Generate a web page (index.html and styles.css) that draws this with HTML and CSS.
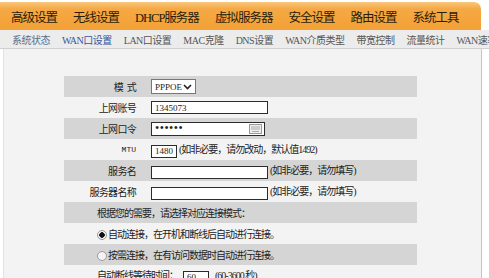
FILE: index.html
```html
<!DOCTYPE html>
<html lang="zh">
<head>
    <meta charset="UTF-8">
    <title>WAN口设置</title>
    <link rel="stylesheet" href="styles.css">
</head>
<body>
    <div class="topnav">
        <span>高级设置</span>
        <span>无线设置</span>
        <span>DHCP服务器</span>
        <span>虚拟服务器</span>
        <span>安全设置</span>
        <span>路由设置</span>
        <span>系统工具</span>
    </div>
    <div class="subnav">
        <span class="sub current">系统状态</span>
        <span class="sub active">WAN口设置</span>
        <span class="sub">LAN口设置</span>
        <span class="sub">MAC克隆</span>
        <span class="sub">DNS设置</span>
        <span class="sub">WAN介质类型</span>
        <span class="sub">带宽控制</span>
        <span class="sub">流量统计</span>
        <span class="sub">WAN速率</span>
    </div>

    <div class="panel">
        <table class="form">
            <tr class="shade">
                <td class="label">模&nbsp;&nbsp;式</td>
                <td class="field">
                    <span class="select">PPPOE
                        <svg width="9" height="6" viewBox="0 0 9 6"><path d="M1 1 L4.5 4.5 L8 1" fill="none" stroke="#222" stroke-width="1.6"/></svg>
                    </span>
                </td>
            </tr>
            <tr>
                <td class="label">上网账号</td>
                <td class="field"><input class="text wide" type="text" value="1345073"></td>
            </tr>
            <tr class="shade">
                <td class="label">上网口令</td>
                <td class="field">
                    <span class="pwd">
                        <input class="text secret" type="password" value="123456">
                        <svg class="kbd" width="13" height="10" viewBox="0 0 13 10">
                            <rect x="0.5" y="0.5" width="12" height="9" fill="#eee" stroke="#999"/>
                            <path d="M2 3h9M2 5h9M3 7.5h7" stroke="#aaa" stroke-width="1"/>
                        </svg>
                    </span>
                </td>
            </tr>
            <tr>
                <td class="label mono">MTU</td>
                <td class="field"><input class="text short" type="text" value="1480"><span class="hint">(如非必要，请勿改动，默认值1492)</span></td>
            </tr>
            <tr class="shade">
                <td class="label">服务名</td>
                <td class="field"><input class="text wide" type="text" value=""><span class="hint">(如非必要，请勿填写)</span></td>
            </tr>
            <tr>
                <td class="label">服务器名称</td>
                <td class="field"><input class="text wide" type="text" value=""><span class="hint">(如非必要，请勿填写)</span></td>
            </tr>
            <tr class="shade">
                <td class="line" colspan="2">根据您的需要，请选择对应连接模式：</td>
            </tr>
            <tr>
                <td class="line" colspan="2"><input class="radio" type="radio" name="mode" checked>自动连接，在开机和断线后自动进行连接。</td>
            </tr>
            <tr class="shade">
                <td class="line" colspan="2"><input class="radio" type="radio" name="mode">按需连接，在有访问数据时自动进行连接。</td>
            </tr>
            <tr>
                <td class="line" colspan="2">自动断线等待时间：<input class="text short gap" type="text" value="60"><span class="hint wide-gap">(60-3600 秒)</span></td>
            </tr>
        </table>
    </div>
</body>
</html>
```

FILE: styles.css
```css
body {
    margin: 0;
    background-color: #fff;
    font-family: "Liberation Serif", "Noto Sans CJK SC", serif;
    color: #222;
    overflow: hidden;
}
.topnav {
    margin-top: 2px;
    width: 481px;
    height: 28px;
    box-sizing: border-box;
    padding-left: 11px;
    display: flex;
    align-items: center;
    gap: 16px;
    background: linear-gradient(#f8c77f, #f5a843 25%, #f3a136);
    border-top-right-radius: 7px;
    font-size: 12.5px;
    letter-spacing: -1px;
    color: #2b1c0a;
    white-space: nowrap;
}
.subnav {
    position: relative;
    height: 18px;
    padding-left: 12px;
    display: flex;
    align-items: center;
    gap: 12px;
    background-color: #ececec;
    border-bottom: 1px solid #cfcfcf;
    font-size: 10px;
    letter-spacing: -0.5px;
    color: #555;
    white-space: nowrap;
    overflow: hidden;
}
.sub { position: relative; }
.sub.current { color: #56718f; }
.sub.active { color: #34569c; }
/* 当前菜单的小三角 */
.sub.current::before {
    content: "";
    position: absolute;
    left: 12px;
    top: -5px;
    border-left: 3px solid transparent;
    border-right: 3px solid transparent;
    border-top: 3px solid #8a8a8a;
}
.panel {
    margin-left: 3px;
    width: 479px;
    height: 229px;
    box-sizing: border-box;
    padding: 27px 0 0 60px;
    background-color: #f3f3f3;
    border-left: 1px solid #e2e2e2;
    border-right: 1px solid #c6c6c6;
}
.form {
    width: 353px;
    border-collapse: collapse;
    border-spacing: 0;
    font-size: 10px;
    letter-spacing: -1px;
}
.form tr { height: 21px; }
.form td {
    padding: 0;
    white-space: nowrap;
}
.form tr.shade td { background-color: #d5d5d5; }
.label {
    width: 80px;
    box-sizing: border-box;
    padding-right: 8px !important;
    text-align: right;
    letter-spacing: -0.7px;
}
.label.mono {
    font-family: "Liberation Mono", monospace;
    font-size: 8px;
    letter-spacing: 0;
}
.field { padding-left: 7px !important; }
.line { padding-left: 33px !important; }

.text {
    height: 13px;
    box-sizing: border-box;
    margin: 0;
    padding: 0 3px;
    vertical-align: middle;
    background-color: #fff;
    border: 1px solid #2c2c2c;
    border-radius: 0;
    font-family: "Liberation Serif", serif;
    font-size: 9px;
    letter-spacing: 0;
    color: #222;
    outline: none;
}
.text.wide { width: 117px; }
.text.short { width: 26px; }
.text.gap { margin-left: 5px; }
.pwd {
    position: relative;
    display: inline-block;
    vertical-align: middle;
}
.text.secret {
    width: 114px;
    height: 14px;
    font-size: 12px;
    letter-spacing: 0.5px;
    display: block;
}
.kbd {
    position: absolute;
    right: 3px;
    top: 2px;
}
.select {
    display: inline-flex;
    align-items: center;
    justify-content: space-between;
    width: 45px;
    height: 15px;
    box-sizing: border-box;
    padding: 0 3px 0 3px;
    vertical-align: middle;
    background-color: #fff;
    border: 1px solid #777;
    font-size: 9px;
    letter-spacing: 0;
}
.hint { margin-left: 2px; }
.hint.wide-gap { margin-left: 6px; }
.radio {
    appearance: none;
    width: 10px;
    height: 10px;
    margin: 0 1px 0 0;
    vertical-align: middle;
    background-color: #f4f4f4;
    border: 1px solid #9a9a9a;
    border-radius: 50%;
    position: relative;
    top: -1px;
}
.radio:checked {
    background: radial-gradient(circle, #111 2.5px, #f4f4f4 3px);
}
```
